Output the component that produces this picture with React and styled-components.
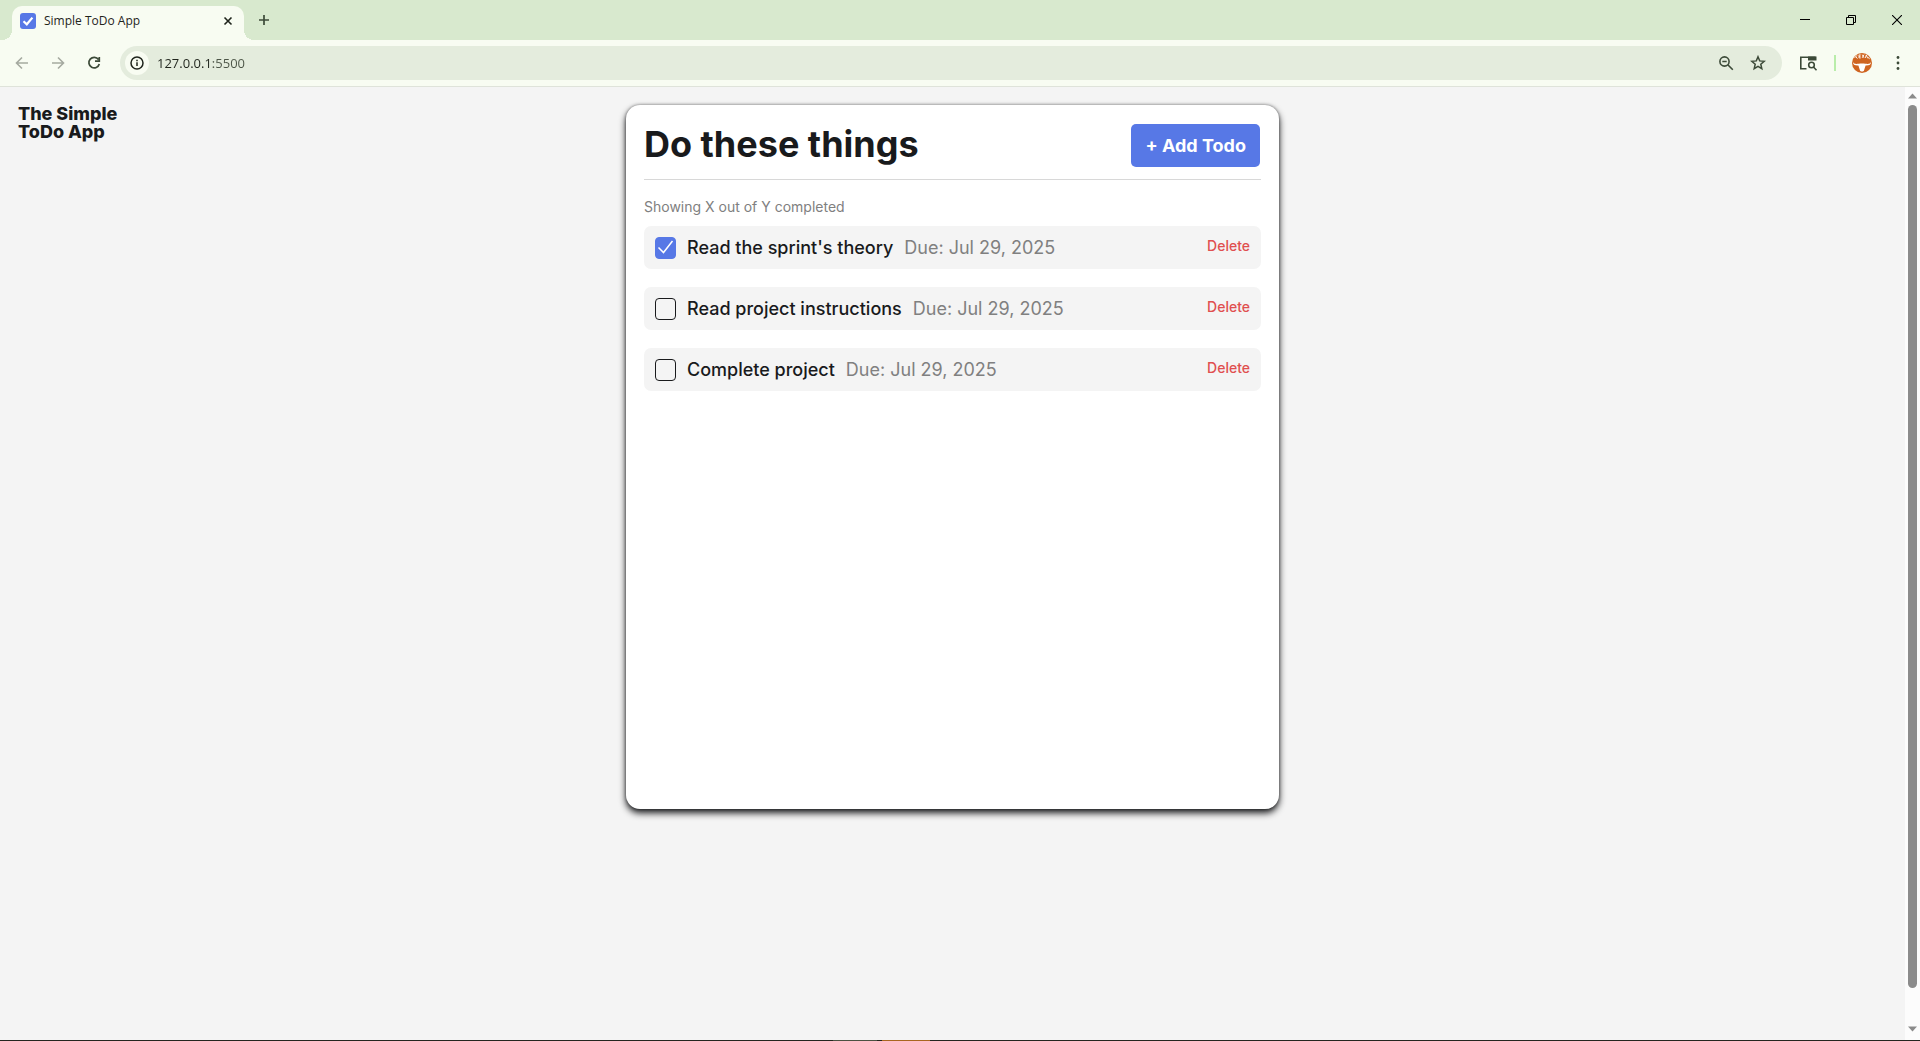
import React, { useState } from "react";
import styled, { createGlobalStyle } from "styled-components";

const GlobalStyle = createGlobalStyle`
  *, *::before, *::after { box-sizing: border-box; }
  body { margin: 0; background: #f4f4f4; }
  button, input { font: inherit; margin: 0; }
`;

const Window = styled.div`
  display: flex;
  flex-direction: column;
  min-height: 100vh;
  font-family: "Open Sans", "Noto Sans", sans-serif;
  color: #1f241c;
`;

const TabStrip = styled.header`
  display: flex;
  align-items: flex-end;
  height: 40px;
  padding-left: 12px;
  background: #d8e9ce;
`;

const Tab = styled.div`
  position: relative;
  display: flex;
  align-items: center;
  gap: 8px;
  width: 232px;
  height: 34px;
  padding: 0 8px 5px;
  border-radius: 10px 10px 0 0;
  background: #f8fcf2;

  &::before, &::after {
    content: "";
    position: absolute;
    bottom: 0;
    width: 10px;
    height: 10px;
  }
  &::before {
    left: -10px;
    background: radial-gradient(circle at 0 0, transparent 10px, #f8fcf2 10px);
  }
  &::after {
    right: -10px;
    background: radial-gradient(circle at 100% 0, transparent 10px, #f8fcf2 10px);
  }
`;

const TabTitle = styled.span`
  flex: 1;
  font-size: 12px;
  line-height: 16px;
`;

const IconButton = styled.button`
  display: flex;
  align-items: center;
  justify-content: center;
  flex: none;
  width: ${(p) => p.$width || 36}px;
  height: ${(p) => p.$height || 36}px;
  padding: 0;
  border: 0;
  background: none;
  color: ${(p) => p.$color || "#3c4a38"};
`;

const NewTab = styled.div`
  display: flex;
  flex: 1;
  align-self: stretch;
  padding: 2px 0 0 2px;
`;

const WindowControls = styled.div`
  display: flex;
  align-self: stretch;
`;

const Toolbar = styled.nav`
  display: flex;
  align-items: center;
  height: 47px;
  padding: 0 4px;
  border-bottom: 1px solid #dfe3da;
  background: #f8fcf2;
`;

const AddressBar = styled.div`
  display: flex;
  align-items: center;
  flex: 1;
  height: 34px;
  margin-left: 8px;
  padding: 0 8px 0 5px;
  border-radius: 17px;
  background: #e4ecdd;
`;

const SiteInfo = styled(IconButton)`
  border-radius: 50%;
  background: #f8fcf2;
`;

const AddressInput = styled.input`
  flex: 1;
  min-width: 0;
  height: 24px;
  padding: 0 0 0 8px;
  border: 0;
  outline: 0;
  font-size: 13px;
  line-height: 24px;
  color: transparent;
  background: linear-gradient(90deg, #1f241c 64px, #4c5547 64px);
  -webkit-background-clip: text;
  background-clip: text;
`;

const Extensions = styled.div`
  display: flex;
  align-items: center;
  padding-left: 8px;
`;

const Separator = styled.span`
  width: 2px;
  height: 16px;
  margin: 0 8px;
  background: #b9edaa;
`;

const Viewport = styled.div`
  display: flex;
  flex: 1;
`;

const Page = styled.div`
  display: grid;
  grid-template-columns: 1fr minmax(0, 653px) 1fr;
  align-items: start;
  flex: 1;
  padding: 18px;
  background: #f4f4f4;
  font-family: Inter, "Liberation Sans", sans-serif;
  color: #191a1c;
`;

const Logo = styled.p`
  margin: 0;
  font-size: 18px;
  font-weight: 800;
  line-height: 18px;
`;

const Card = styled.main`
  min-height: 704px;
  padding: 18px;
  border-radius: 14px;
  background: #fff;
  box-shadow: 0 4px 7px #191a1c, 0 0 3px rgba(25, 26, 28, 0.5);
`;

const CardHeader = styled.div`
  display: flex;
  align-items: flex-start;
  justify-content: space-between;
  padding: 1px 1px 12px 0;
  border-bottom: 1px solid #d8d8d8;
`;

const Title = styled.h1`
  margin: 0;
  font-size: 36px;
  font-weight: 700;
  line-height: 40px;
`;

const AddButton = styled.button`
  height: 43px;
  padding: 0 14px 0 15px;
  border: 0;
  border-radius: 5px;
  background: #5778e6;
  color: #fff;
  font-size: 18px;
  font-weight: 700;
  line-height: 22px;
`;

const Counter = styled.p`
  margin: 18px 0 10px;
  font-size: 14px;
  line-height: 18px;
  color: #808080;
`;

const List = styled.ul`
  display: flex;
  flex-direction: column;
  gap: 18px;
  margin: 0;
  padding: 0;
  list-style: none;
`;

const Item = styled.li`
  display: flex;
  align-items: center;
  gap: 11px;
  height: 43px;
  padding: 0 11px;
  border-radius: 7px;
  background: #f4f4f4;
  font-size: 18px;
  line-height: 22px;
`;

const ItemLabel = styled.label`
  display: flex;
  align-items: center;
  gap: 11px;
  font-weight: 500;
`;

const CheckWrap = styled.span`
  display: grid;
  width: 21px;
  height: 22px;

  & > * { grid-area: 1 / 1; }
  svg { pointer-events: none; }
`;

const Checkbox = styled.input`
  appearance: none;
  width: 21px;
  height: 22px;
  border: 1px solid #191a1c;
  border-radius: 4px;

  &:checked {
    border-color: #5778e6;
    background: #5778e6;
  }
`;

const DueDate = styled.span`
  flex: 1;
  color: #808080;
`;

const DeleteButton = styled.button`
  padding: 0 0 4px;
  border: 0;
  background: none;
  color: #e04f4f;
  font-size: 14px;
  font-weight: 500;
  line-height: 18px;
`;

const ScrollTrack = styled.div`
  display: flex;
  flex-direction: column;
  align-items: center;
  gap: 6px;
  width: 15px;
  padding: 6px 0 8px;
  background: #fcfcfc;
`;

const ScrollThumb = styled.div`
  flex: 1;
  width: 9px;
  margin-bottom: 32px;
  border-radius: 5px;
  background: #8b8b8b;
`;

const TaskbarEdge = styled.div`
  height: 1px;
  background: linear-gradient(90deg, #24251f 833px, #4c5142 833px 877px, #24251f 877px 882px, #a9651f 882px 930px, #24251f 930px);
`;

const Svg = ({ size = 20, children, ...rest }) => (
  <svg width={size} height={size} viewBox={`0 0 ${size} ${size}`} fill="none" stroke="currentColor" strokeWidth="2" aria-hidden="true" {...rest}>
    {children}
  </svg>
);

const Favicon = () => (
  <Svg size={16} stroke="#fff">
    <rect width="16" height="16" rx="3" fill="#5778e6" stroke="none" />
    <path d="M3.5 8.2 6.8 11.3 12.4 4.6" strokeWidth="2.2" />
  </Svg>
);

const Longhorn = () => (
  <Svg size={20} stroke="none">
    <circle cx="10" cy="10" r="10" fill="#cf6420" />
    <path d="M2.6 4.8 5 2.4M3.8 3.6l1.6 2M7 1.8v3.2M7 2h1.8M7 3.4h1.5M7 4.9h1.8M10.200 1.600l1.800 3.200M12 1.600l-1.800 3.200M13.400 4.900l.9-3 1.400 3.400M17.400 3.900l-1 .9 1.300 1" stroke="#fff" strokeWidth="0.9" />
    <path d="M1 8.800c.6 1.900 2.200 2.400 5.500 2 1.200-.5 5.800-.5 7 0 3.300.4 4.900-.1 5.500-2 .1 2.700-1.500 3.900-5.400 3.800L11.900 17.700c-.4 1.100-3.400 1.100-3.800 0L6.400 12.600C2.500 12.700.9 11.500 1 8.800Z" fill="#fff" />
  </Svg>
);

const initialTodos = [
  { id: "theory", name: "Read the sprint's theory", due: "Jul 29, 2025", done: true },
  { id: "instructions", name: "Read project instructions", due: "Jul 29, 2025", done: false },
  { id: "project", name: "Complete project", due: "Jul 29, 2025", done: false },
];

function Browser({ children }) {
  return (
    <Window>
      <GlobalStyle />
      <TabStrip>
        <Tab>
          <Favicon />
          <TabTitle>Simple ToDo App</TabTitle>
          <IconButton $width={16} $height={16} $color="#1f241c" aria-label="Close tab">
            <Svg size={16}><path d="m4.5 4.5 7 7m0-7-7 7" strokeWidth="1.6" /></Svg>
          </IconButton>
        </Tab>
        <NewTab>
          <IconButton aria-label="New tab">
            <Svg><path d="M10 5v10M5 10h10" strokeWidth="1.7" /></Svg>
          </IconButton>
        </NewTab>
        <WindowControls>
          <IconButton $width={46} $height={40} $color="#000" aria-label="Minimize">
            <Svg size={10} strokeWidth="1"><path d="M0 4.5h10" /></Svg>
          </IconButton>
          <IconButton $width={46} $height={40} $color="#000" aria-label="Restore">
            <Svg size={10} strokeWidth="1"><path d="M.5 2.5h7v7h-7zM2.5 2.5v-2h7v7h-2" /></Svg>
          </IconButton>
          <IconButton $width={46} $height={40} $color="#000" aria-label="Close">
            <Svg size={10} strokeWidth="1.1"><path d="m0 0 10 10M10 0 0 10" /></Svg>
          </IconButton>
        </WindowControls>
      </TabStrip>
      <Toolbar>
        <IconButton $color="#a5aaa0" aria-label="Back">
          <Svg><path d="M16 10H5M10 4.5 4.5 10l5.500 5.500" strokeWidth="1.6" /></Svg>
        </IconButton>
        <IconButton $color="#a5aaa0" aria-label="Forward">
          <Svg><path d="M4 10h11M10 4.5l5.500 5.500-5.500 5.500" strokeWidth="1.6" /></Svg>
        </IconButton>
        <IconButton aria-label="Reload">
          <Svg><path d="M14.500 6.500A5.300 5.300 0 1 0 15.300 11M15.300 4v4.200H11" strokeWidth="1.7" /></Svg>
        </IconButton>
        <AddressBar>
          <SiteInfo $width={24} $height={24} $color="#1f241c" aria-label="Site information">
            <Svg size={16} strokeWidth="1.5"><circle cx="8" cy="8" r="6" /><path d="M8 7.3v3.700M8 4.700v1.600" /></Svg>
          </SiteInfo>
          <AddressInput aria-label="Address" defaultValue="127.0.0.1:5500" spellCheck="false" />
          <IconButton $width={32} $height={28} aria-label="Zoom">
            <Svg size={16}><circle cx="6.5" cy="6.5" r="4.6" strokeWidth="1.6" /><path d="m9.800 9.800 5 5M4.300 6.500h4.400" strokeWidth="1.6" /></Svg>
          </IconButton>
          <IconButton $width={32} $height={28} aria-label="Bookmark this page">
            <Svg size={16}><path d="m8 1.800 1.700 4.100 4.500.4-3.400 2.900 1 4.400L8 11.300l-3.800 2.300 1-4.400-3.400-2.900 4.500-.4Z" strokeWidth="1.5" /></Svg>
          </IconButton>
        </AddressBar>
        <Extensions>
          <IconButton aria-label="Search tabs">
            <Svg><path d="M8.500 15.800H2.800V4.300H17.500" strokeWidth="1.6" /><path d="M10 3.500H18.500V7.500H10z" fill="currentColor" stroke="none" /><circle cx="13.500" cy="12" r="2.800" strokeWidth="1.6" /><path d="m15.500 14 3 3.200" strokeWidth="1.6" /></Svg>
          </IconButton>
          <Separator />
          <IconButton aria-label="Profile"><Longhorn /></IconButton>
          <IconButton aria-label="Menu">
            <Svg stroke="none" fill="currentColor"><circle cx="10" cy="4.500" r="1.400" /><circle cx="10" cy="10" r="1.400" /><circle cx="10" cy="15.500" r="1.400" /></Svg>
          </IconButton>
        </Extensions>
      </Toolbar>
      <Viewport>
        {children}
        <ScrollTrack aria-hidden="true">
          <svg width="9" height="6"><path d="M0 5.500 4.500.5 9 5.500Z" fill="#8b8b8b" /></svg>
          <ScrollThumb />
          <svg width="9" height="6"><path d="M0 .5h9L4.500 5.500Z" fill="#8b8b8b" /></svg>
        </ScrollTrack>
      </Viewport>
      <TaskbarEdge />
    </Window>
  );
}

export default function App() {
  const [todos, setTodos] = useState(initialTodos);
  const toggle = (id) => setTodos(todos.map((t) => (t.id === id ? { ...t, done: !t.done } : t)));
  const remove = (id) => setTodos(todos.filter((t) => t.id !== id));

  return (
    <Browser>
      <Page>
        <Logo>The Simple<br />ToDo App</Logo>
        <Card>
          <CardHeader>
            <Title>Do these things</Title>
            <AddButton type="button">+ Add Todo</AddButton>
          </CardHeader>
          <Counter>Showing X out of Y completed</Counter>
          <List>
            {todos.map((todo) => (
              <Item key={todo.id}>
                <ItemLabel>
                  <CheckWrap>
                    <Checkbox type="checkbox" checked={todo.done} onChange={() => toggle(todo.id)} />
                    {todo.done && (
                      <Svg size={21} stroke="#fff" strokeWidth="1.5"><path d="m3.500 10.500 5 5L17.500 4" /></Svg>
                    )}
                  </CheckWrap>
                  {todo.name}
                </ItemLabel>
                <DueDate>Due: {todo.due}</DueDate>
                <DeleteButton type="button" onClick={() => remove(todo.id)}>Delete</DeleteButton>
              </Item>
            ))}
          </List>
        </Card>
      </Page>
    </Browser>
  );
}
